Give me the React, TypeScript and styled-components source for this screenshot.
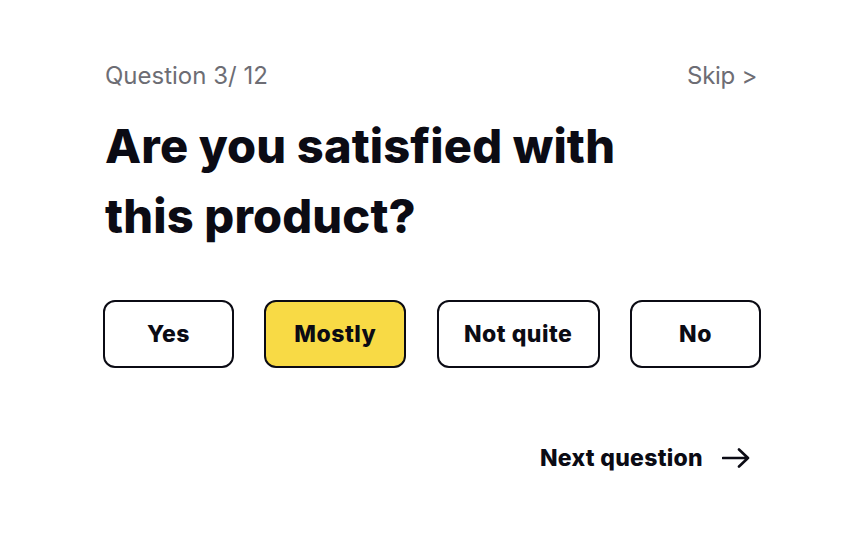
import React, { useState } from 'react';
import styled, { createGlobalStyle } from 'styled-components';

const GlobalStyle = createGlobalStyle`
  html, body {
    margin: 0;
    padding: 0;
    background: #ffffff;
  }
  body {
    font-family: Inter, "Noto Sans", sans-serif;
    color: #0b0b14;
  }
`;

const options = [
  { label: 'Yes', width: 131 },
  { label: 'Mostly', width: 142 },
  { label: 'Not quite', width: 163 },
  { label: 'No', width: 131 },
];

const App: React.FC = () => {
  const [selected, setSelected] = useState('Mostly');

  return (
    <>
      <GlobalStyle />
      <Card>
        <TopBar>
          <Counter>Question 3/ 12</Counter>
          <SkipLink>Skip &gt;</SkipLink>
        </TopBar>
        <Title>
          Are you satisfied with
          <br />
          this product?
        </Title>
        <Options>
          {options.map(opt => (
            <OptionButton
              key={opt.label}
              $width={opt.width}
              $active={selected === opt.label}
              onClick={() => setSelected(opt.label)}
            >
              {opt.label}
            </OptionButton>
          ))}
        </Options>
        <Footer>
          <NextButton>
            Next question
            <svg width="28" height="22" viewBox="0 0 28 22" fill="none">
              <path
                d="M1 11H26M17 2.5L26 11L17 19.5"
                stroke="#0b0b14"
                strokeWidth="2.6"
                strokeLinecap="round"
                strokeLinejoin="round"
              />
            </svg>
          </NextButton>
        </Footer>
      </Card>
    </>
  );
};

export default App;

const Card = styled.main`
  width: 658px;
  margin: 0 auto;
  padding-top: 61px;
`;

const TopBar = styled.div`
  display: flex;
  justify-content: space-between;
  align-items: center;
  height: 30px;
  padding: 0 4px 0 2px;
`;

const Counter = styled.span`
  font-size: 24px;
  line-height: 30px;
  color: #6d6d74;
`;

const SkipLink = styled.a`
  font-size: 24px;
  line-height: 30px;
  color: #6d6d74;
  letter-spacing: -0.3px;
  cursor: pointer;
`;

const Title = styled.h1`
  margin: 20px 0 0 2px;
  font-size: 47px;
  line-height: 70px;
  font-weight: 800;
  letter-spacing: 0.15px;
  color: #0b0b14;
`;

const Options = styled.div`
  display: flex;
  justify-content: space-between;
  margin-top: 49px;
`;

const OptionButton = styled.button<{ $width: number; $active: boolean }>`
  width: ${p => p.$width}px;
  height: 68px;
  box-sizing: border-box;
  border: 2.5px solid #0b0b14;
  border-radius: 12px;
  background: ${p => (p.$active ? '#f8da45' : '#ffffff')};
  font-family: Inter, "Noto Sans", sans-serif;
  font-size: 23px;
  font-weight: 800;
  letter-spacing: 0.5px;
  color: #0b0b14;
  cursor: pointer;
`;

const Footer = styled.div`
  display: flex;
  justify-content: flex-end;
  margin-top: 75px;
  padding-right: 11px;
`;

const NextButton = styled.button`
  display: flex;
  align-items: center;
  gap: 19px;
  padding: 0;
  border: none;
  background: none;
  font-family: Inter, "Noto Sans", sans-serif;
  font-size: 23px;
  line-height: 30px;
  font-weight: 800;
  letter-spacing: 0.3px;
  color: #0b0b14;
  cursor: pointer;
`;
